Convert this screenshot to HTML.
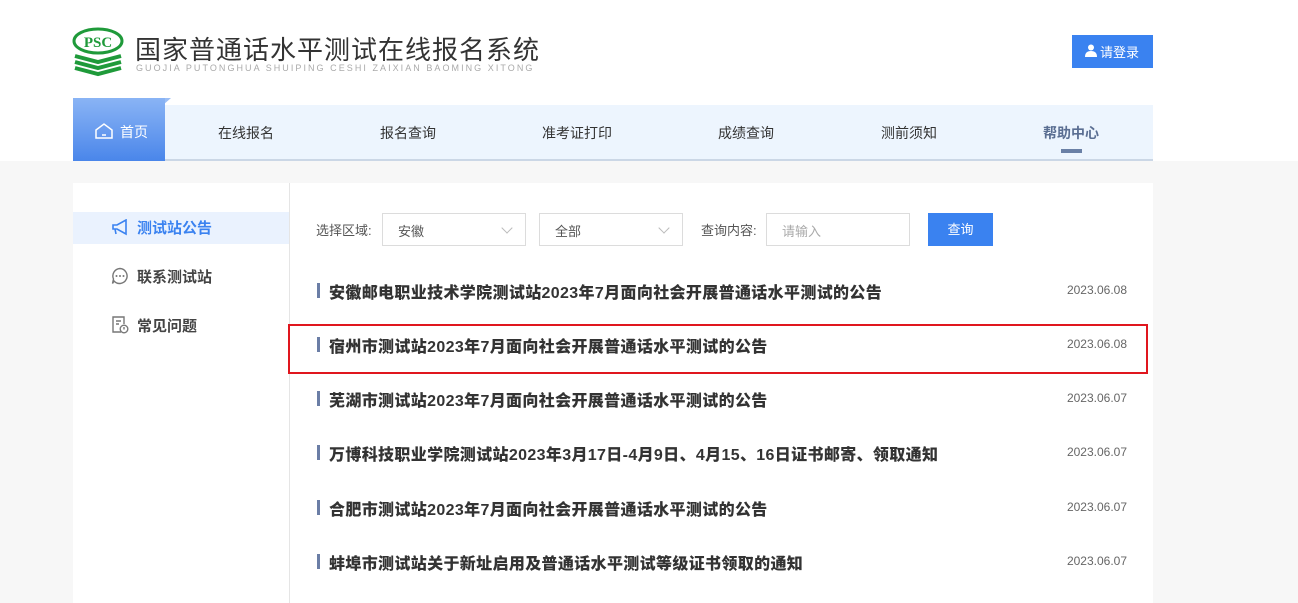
<!DOCTYPE html>
<html><head><meta charset="utf-8"><style>
*{margin:0;padding:0;box-sizing:border-box}
body{width:1298px;height:592px;overflow:hidden;background:#f7f7f7;font-family:"Liberation Sans","Noto Sans CJK SC",sans-serif;position:relative}
.top{position:absolute;left:0;top:0;width:1298px;height:161px;background:#fff}
.abs{position:absolute}
.nav{left:165px;top:105px;width:988px;height:56px;background:#edf5fe;border-bottom:2px solid #cbd7e6}
.nav span{position:absolute;top:18px;font-size:14px;color:#333;transform:translateX(-50%)}
.home{left:73px;top:98px;width:92px;height:63px;background:linear-gradient(#8ab4f5,#4a86ea);color:#fff;font-size:14px}
.card{left:73px;top:183px;width:1080px;height:420px;background:#fff}
.side{left:73px;top:183px;width:217px;height:420px;border-right:1px solid #e5e5e5}
.row{position:absolute;left:317px;width:810px;font-size:16px;font-weight:bold;color:#333;letter-spacing:0.35px}
.row:before{content:"";position:absolute;left:0;top:4px;width:3px;height:15px;background:#6b7ea6}
.row b{margin-left:12px}
.row i{position:absolute;right:0;top:4px;font-style:normal;font-weight:normal;font-size:12px;color:#666;letter-spacing:0}
.sel{position:absolute;top:213px;height:33px;border:1px solid #dcdcdc;font-size:13px;color:#555;padding:7px 0 0 15px}
.sel:after{content:"";position:absolute;right:14px;top:10px;width:7px;height:7px;border-right:1px solid #bbb;border-bottom:1px solid #bbb;transform:rotate(45deg)}
</style></head><body>
<div class="top"></div>
<svg class="abs" style="left:72px;top:26px" width="54" height="52" viewBox="0 0 54 52">
<ellipse cx="26" cy="15" rx="24" ry="12" fill="none" stroke="#1f9a3a" stroke-width="3"/>
<text x="26" y="21" font-family="Liberation Serif" font-weight="bold" font-size="15" fill="#1f9a3a" text-anchor="middle">PSC</text>
<path d="M3 30 L26 36 L49 30 M3 36 L26 42 L49 36 M3 42 L26 48 L49 42" stroke="#1f9a3a" stroke-width="4" fill="none"/>
</svg>
<div class="abs" style="left:135px;top:30px;font-size:26px;color:#333;letter-spacing:1px;font-family:'Noto Sans CJK SC',sans-serif">国家普通话水平测试在线报名系统</div>
<div class="abs" style="left:136px;top:63px;font-size:9px;color:#aaa;letter-spacing:2.05px">GUOJIA PUTONGHUA SHUIPING CESHI ZAIXIAN BAOMING XITONG</div>
<div class="abs" style="left:1072px;top:35px;width:81px;height:33px;background:#3a82f0;color:#fff;font-size:13px;padding:7px 0 0 28px">请登录</div>
<svg class="abs" style="left:1085px;top:44px" width="12" height="13" viewBox="0 0 12 13"><circle cx="6" cy="3.5" r="3" fill="#fff"/><path d="M0 13 Q0 7 6 7 Q12 7 12 13Z" fill="#fff"/></svg>
<div class="abs nav">
<span style="left:81px">在线报名</span><span style="left:243px">报名查询</span><span style="left:412px">准考证打印</span><span style="left:581px">成绩查询</span><span style="left:744px">测前须知</span><span style="left:906px;color:#5a6e92;font-weight:bold">帮助中心</span>
<div class="abs" style="left:896px;top:44px;width:21px;height:4px;background:#6a80a6"></div>
</div>
<div class="abs" style="left:163px;top:98px;width:0;height:0;border-left:8px solid #9bbef5;border-top:0;border-bottom:7px solid transparent"></div>
<div class="abs home"><svg class="abs" style="left:22px;top:25px" width="18" height="16" viewBox="0 0 18 16"><path d="M1 7 L9 1 L17 7 V15 H1Z M7 12 H11" fill="none" stroke="#fff" stroke-width="1.5"/></svg><span class="abs" style="left:47px;top:24px">首页</span></div>
<div class="abs card"></div>
<div class="abs side"></div>
<div class="abs" style="left:73px;top:212px;width:216px;height:32px;background:#eaf2fe"></div>
<svg class="abs" style="left:111px;top:219px" width="18" height="17" viewBox="0 0 18 17"><path d="M2 6 H6 L15 1 V15 L6 10 H2Z M4 10 L5 15" fill="none" stroke="#3a82f0" stroke-width="1.6"/></svg>
<div class="abs" style="left:137px;top:217px;font-size:15px;font-weight:bold;color:#3a82f0">测试站公告</div>
<svg class="abs" style="left:111px;top:267px" width="18" height="18" viewBox="0 0 18 18"><path d="M9 1.5 A7.5 7.5 0 1 1 3 14 L1.5 16.5 L2.5 12 A7.5 7.5 0 0 1 9 1.5Z" fill="none" stroke="#777" stroke-width="1.4"/><circle cx="5.5" cy="9" r="1" fill="#777"/><circle cx="9" cy="9" r="1" fill="#777"/><circle cx="12.5" cy="9" r="1" fill="#777"/></svg>
<div class="abs" style="left:137px;top:266px;font-size:15px;font-weight:bold;color:#444">联系测试站</div>
<svg class="abs" style="left:112px;top:316px" width="17" height="18" viewBox="0 0 17 18"><path d="M9 16 H1 V1 H12 V8 M4 5 H9 M4 8 H7" fill="none" stroke="#777" stroke-width="1.4"/><circle cx="12" cy="13" r="3.8" fill="none" stroke="#777" stroke-width="1.4"/><path d="M12 11 V13.5" stroke="#777" stroke-width="1.4"/></svg>
<div class="abs" style="left:137px;top:315px;font-size:15px;font-weight:bold;color:#444">常见问题</div>
<div class="abs" style="left:316px;top:220px;font-size:13px;color:#555">选择区域:</div>
<div class="sel" style="left:382px;width:144px">安徽</div>
<div class="sel" style="left:539px;width:144px">全部</div>
<div class="abs" style="left:701px;top:220px;font-size:13px;color:#555">查询内容:</div>
<div class="abs" style="left:766px;top:213px;width:144px;height:33px;border:1px solid #dcdcdc;font-size:13px;color:#aaa;padding:7px 0 0 15px">请输入</div>
<div class="abs" style="left:928px;top:213px;width:65px;height:33px;background:#3a82f0;color:#fff;font-size:13px;text-align:center;line-height:33px">查询</div>
<div class="row" style="top:279px"><b>安徽邮电职业技术学院测试站2023年7月面向社会开展普通话水平测试的公告</b><i>2023.06.08</i></div>
<div class="abs" style="left:288px;top:324px;width:860px;height:50px;border:2px solid #e0161e"></div>
<div class="row" style="top:333px"><b>宿州市测试站2023年7月面向社会开展普通话水平测试的公告</b><i>2023.06.08</i></div>
<div class="row" style="top:387px"><b>芜湖市测试站2023年7月面向社会开展普通话水平测试的公告</b><i>2023.06.07</i></div>
<div class="row" style="top:441px"><b>万博科技职业学院测试站2023年3月17日-4月9日、4月15、16日证书邮寄、领取通知</b><i>2023.06.07</i></div>
<div class="row" style="top:496px"><b>合肥市测试站2023年7月面向社会开展普通话水平测试的公告</b><i>2023.06.07</i></div>
<div class="row" style="top:550px"><b>蚌埠市测试站关于新址启用及普通话水平测试等级证书领取的通知</b><i>2023.06.07</i></div>
</body></html>
